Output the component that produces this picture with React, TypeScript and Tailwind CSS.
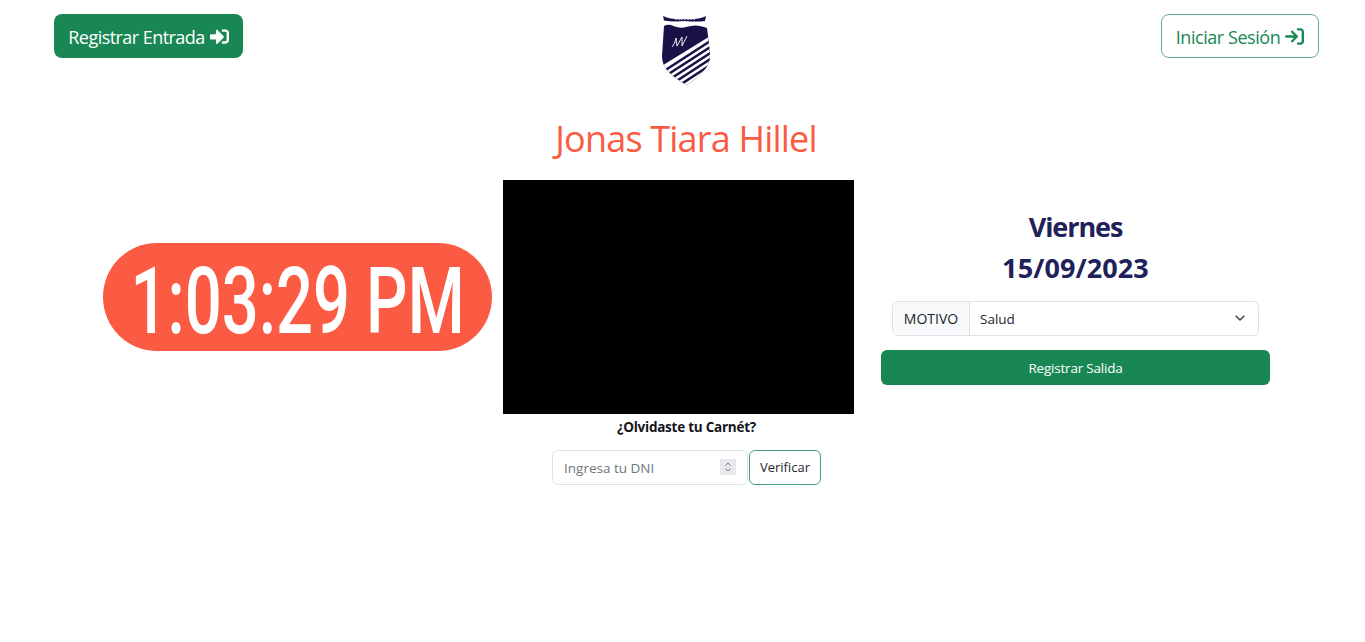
import React from 'react';
import { FaSignInAlt } from 'react-icons/fa';
import { FaArrowRightToBracket } from 'react-icons/fa6';
import { ChevronDown } from 'lucide-react';

const shield = 'M24 21 Q27 19 31 20 Q39 24 46 22 Q56 19 64 22 L67 23 Q69 38 70 50 Q70 58 66 63 Q58 73 47 80 Q35 74 27 65 Q22 59 22 51 Q23 36 24 21 Z';

function Logo() {
  return (
    <svg viewBox="0 0 90 90" className="w-[90px] h-[90px]">
      <defs>
        <clipPath id="crest">
          <path d={shield} />
        </clipPath>
      </defs>
      <path d="M23 11 Q32 15 45 14 Q58 15 66 11 L65 16 Q56 17 45 16 Q33 17 24 15.5 Z" fill="#1b1148" />
      <path d="M35 14.2 H55" stroke="#c9c9dc" strokeWidth="1" strokeDasharray="2 1" />
      <path d={shield} fill="#1b1148" />
      <g clipPath="url(#crest)">
        <path d="M72 30 L72 90 L20 90 L20 62 Z" fill="#ffffff" />
        <g stroke="#1b1148" strokeWidth="2.6">
          <path d="M72 35 L24 66" />
          <path d="M72 41 L27 70" />
          <path d="M72 47 L31 73.5" />
          <path d="M72 53 L35 77" />
          <path d="M72 59 L39 80.5" />
        </g>
      </g>
      <path d="M32 42 Q35 39 36 33 L37 41 L42 32 L42 41 L47 31" stroke="#ffffff" strokeWidth="0.9" fill="none" />
    </svg>
  );
}

export default function App() {
  return (
    <div className="min-h-[642px] bg-white font-['Open_Sans','Noto_Sans',sans-serif] text-[#212529]">
      {/* Header */}
      <div className="flex items-start justify-between pl-[54px] pr-[46px] pt-[14px] h-[117px] relative">
        <button className="h-[44px] w-[189px] rounded-[8px] bg-[#198754] text-white flex items-center justify-center gap-[5px]">
          <span className="text-[18px] tracking-[-0.55px] pt-[3px]">Registrar Entrada</span>
          <FaSignInAlt className="w-[19px] h-[19px] mt-[1px]" />
        </button>
        <div className="absolute left-[640px] top-[5px]">
          <Logo />
        </div>
        <button className="h-[44px] w-[158px] rounded-[8px] border border-[#198754]/70 text-[#198754] flex items-center justify-center gap-[5px]">
          <span className="text-[18px] tracking-[-0.45px] pt-[3px]">Iniciar Sesión</span>
          <FaArrowRightToBracket className="w-[19px] h-[19px] mt-[1px]" />
        </button>
      </div>

      <h1 className="text-center text-[#fb5a43] text-[36px] leading-[44px] h-[63px] pl-[7px] tracking-[-0.8px]">Jonas Tiara Hillel</h1>

      {/* Main row */}
      <div className="flex items-start pl-[103px]">
        <div className="h-[234px] flex items-center">
          <div className="w-[389px] h-[108px] rounded-full bg-[#fb5a43] flex items-center justify-center">
            <span className="inline-block whitespace-nowrap text-white text-[93px] leading-none font-medium font-['Roboto',sans-serif] scale-x-[0.7] pt-[8px]">1:03:29 PM</span>
          </div>
        </div>

        <div className="ml-[11px] w-[367px]">
          <div className="w-[351px] h-[234px] bg-black" />
          <p className="mt-[3px] text-center text-[13.5px] leading-[21px] font-bold text-[#14141a] tracking-[-0.25px]">¿Olvidaste tu Carnét?</p>
          <div className="mt-[12px] flex justify-center gap-[1px]">
            <div className="relative w-[196px] h-[35px] rounded-[6px] border border-[#dee2e6] bg-white pl-[11px] pt-[1px] flex items-center text-[13.5px] text-[#6c757d]">
              Ingresa tu DNI
              <span className="absolute right-[11px] top-[8px] w-[16px] h-[16px] bg-[#e9e9ed] flex flex-col items-center justify-center">
                <svg viewBox="0 0 10 12" className="w-[10px] h-[12px]" fill="none" stroke="#7a7a80" strokeWidth="1">
                  <path d="M2.5 4.5 L5 2 L7.5 4.5 M2.5 7.5 L5 10 L7.5 7.5" />
                </svg>
              </span>
            </div>
            <button className="w-[72px] h-[35px] rounded-[6px] border border-[#198754]/80 pt-[1px] text-[13px] text-[#212529]">Verificar</button>
          </div>
        </div>

        <div className="ml-[11px] w-[389px] flex flex-col items-center pt-[26px]">
          <p className="text-[27px] leading-[41px] font-bold text-[#20205a] tracking-[-1.1px]">Viernes</p>
          <p className="text-[27px] leading-[41px] font-bold text-[#20205a] tracking-[0.1px]">15/09/2023</p>
          <div className="mt-[13px] flex w-[367px] h-[35px] rounded-[6px] border border-[#dee2e6] text-[14px] overflow-hidden">
            <span className="w-[77px] bg-[#f8f9fa] border-r border-[#dee2e6] flex items-center justify-center">MOTIVO</span>
            <div className="relative flex-1 flex items-center pl-[10px] pt-[1px] text-[13.5px]">
              Salud
              <ChevronDown className="absolute right-[10px] top-[8px] w-[16px] h-[16px] text-[#343a40]" />
            </div>
          </div>
          <button className="mt-[14px] w-full h-[35px] rounded-[6px] bg-[#198754] pt-[1px] text-white text-[13.5px] tracking-[-0.2px]">Registrar Salida</button>
        </div>
      </div>
    </div>
  );
}
